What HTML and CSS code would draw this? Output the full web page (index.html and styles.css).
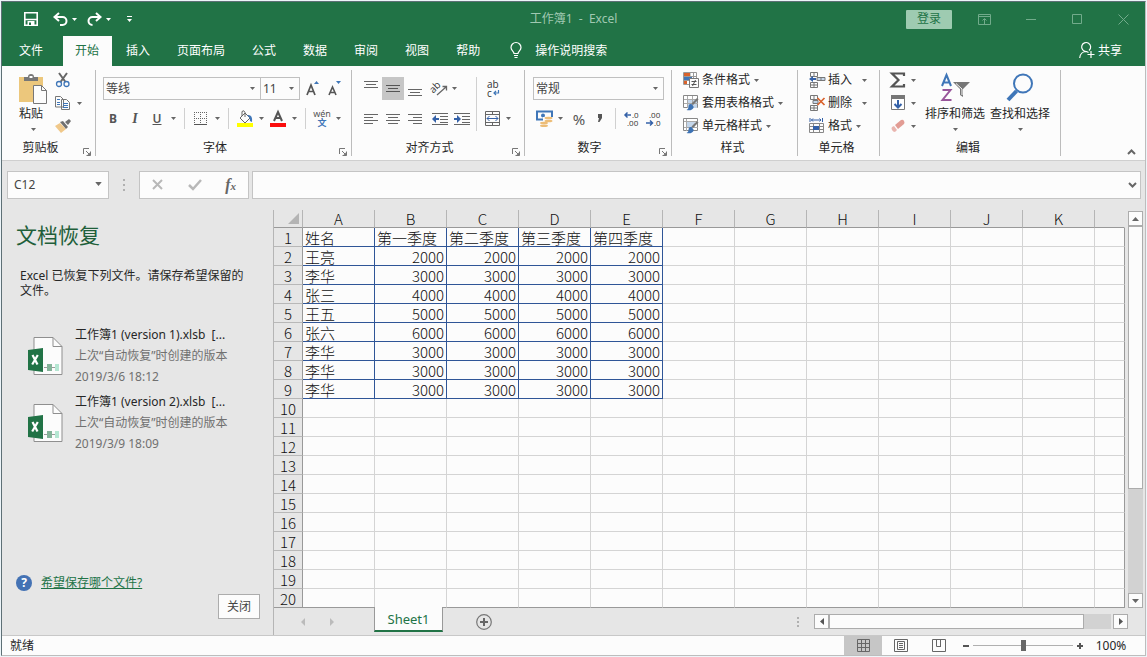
FILE: index.html
```html
<!DOCTYPE html>
<html lang="zh-CN">
<head>
<meta charset="utf-8">
<title>工作簿1 - Excel</title>
<link rel="stylesheet" href="styles.css">
</head>
<body>
<svg class="defs" aria-hidden="true">
  <symbol id="down" viewBox="0 0 5 3"><path d="M0 0h5L2.500 3z" fill="currentColor"/></symbol>
  <symbol id="launch" viewBox="0 0 8 8"><path d="M.5 6V.5H6M3 3l4 4M7.500 3.500v4h-4" fill="none" stroke="#777"/><path d="M7.500 4v3.500H4z" fill="#777"/></symbol>
  <symbol id="file" viewBox="0 0 36 40">
    <path d="M6 1.500h19l9 9V38.500H6z" fill="#fcfcfc" stroke="#8f8f8f"/><path d="M25 1.500V10.500h9" fill="none" stroke="#8f8f8f"/>
    <path d="M0 14l15-2v24L0 34z" fill="#217346"/><path d="M4.500 19l5 9.500M9.800 19l-5.600 9.500" stroke="#fff" stroke-width="2.200"/>
    <path d="M16 31.500h15" stroke="#9a9a9a"/><path d="M19 28h5v7h-5z" fill="#84b399"/><path d="M27 28h4v7h-4z" fill="#b5e6d2"/>
  </symbol>
  <symbol id="brushmark" viewBox="0 0 16 16"><path d="M15.500 4.500L10 10l-1.500-1.500L14 3z" fill="#777"/><path d="M9 9.500c-2-1-3.500 0-3.500 2.500 0 1.500-1 2.500-2 3 3 .8 6.500.2 7.300-3z" fill="#3c72b4"/></symbol>
</svg>
<div class="window">
  <header class="titlebar">
    <div class="quick">
      <button aria-label="保存"><svg width="14" height="14"><path d="M.8.8h12.400v12.400H.800zM1 7.500h12" fill="none" stroke="#fff" stroke-width="1.600"/><path d="M3.500 9h7v4.500h-7z" fill="#fff"/><path d="M5 10.500h2V13H5z" fill="#217346"/></svg></button>
      <button class="undo" aria-label="撤消"><svg width="15" height="14"><path d="M6 1L1.500 5L6 9M2 5h7.500a4 4 0 0 1 0 8H7" fill="none" stroke="#fff" stroke-width="2"/></svg></button>
      <button class="drop" aria-label="撤消列表"><svg width="5" height="3"><use href="#down"/></svg></button>
      <button class="redo" aria-label="恢复"><svg width="15" height="14"><path d="M9 1l4.500 4L9 9M13 5H5.500a4 4 0 0 0 0 8" fill="none" stroke="#fff" stroke-width="2"/></svg></button>
      <button class="drop" aria-label="恢复列表"><svg width="5" height="3"><use href="#down"/></svg></button>
      <button class="custom" aria-label="自定义快速访问工具栏"><svg width="5" height="6"><path d="M0 .5h5" stroke="#fff"/><path d="M0 3h5L2.500 6z" fill="#fff"/></svg></button>
    </div>
    <h1 class="title">工作簿1&nbsp; -&nbsp; Excel</h1>
    <div class="winctl">
      <button class="login">登录</button>
      <button aria-label="功能区显示选项"><svg width="13" height="11"><path d="M.5.5h12v10H.500zM.5 2.500h12M6.500 10V5M4.500 6.500l2-2 2 2" fill="none" stroke="#72ab8b"/></svg></button>
      <button aria-label="最小化"><svg width="11" height="11"><path d="M0 5.500h10" stroke="#72ab8b"/></svg></button>
      <button aria-label="最大化"><svg width="11" height="11"><path d="M.5.5h9v9h-9z" fill="none" stroke="#72ab8b"/></svg></button>
      <button aria-label="关闭窗口"><svg width="11" height="11"><path d="M.5.5l10 10M10.500.5l-10 10" stroke="#72ab8b"/></svg></button>
    </div>
  </header>
  <nav class="tabs">
    <button class="file">文件</button><button class="active">开始</button><button>插入</button><button>页面布局</button><button>公式</button><button>数据</button><button>审阅</button><button>视图</button><button>帮助</button>
    <button class="tell"><svg width="12" height="17"><path d="M4 11.500c0-2-3-3-3-6a5 5 0 0 1 10 0c0 3-3 4-3 6zM4 13.500h4M4.500 15.500h3" fill="none" stroke="#fff" stroke-width="1.200"/></svg>操作说明搜索</button>
    <button class="share"><svg width="16" height="17"><path d="M7.500 9.500a4.500 4.500 0 1 1 2.500-1M7.500 9.500C4 9.500 1 12 .7 16M7.500 9.500l2 1M12 9v7M8.500 12.500h7" fill="none" stroke="#fff" stroke-width="1.200"/></svg>共享</button>
  </nav>

  <section class="ribbon">
    <div class="group clip">
      <div class="body">
        <button class="big paste"><svg width="29" height="31"><path d="M0 3h24v25H0z" fill="#ecc77c"/><path d="M5 7V3h4q0-3 3-3t3 3h4v4z" fill="#777"/><path d="M10.500 2h3v2h-3z" fill="#fff"/><path d="M14.500 11.500h8l5 5v13h-13z" fill="#fcfcfc" stroke="#777"/><path d="M22.500 11.500v5h5" fill="none" stroke="#777"/></svg><span>粘贴</span><svg width="5" height="3"><use href="#down"/></svg></button>
        <div class="stack">
          <div class="row"><button class="ic" aria-label="剪切"><svg width="16" height="16"><path d="M4 1l6.500 9M12 1L5.500 10" stroke="#666" stroke-width="2"/><circle cx="4" cy="12" r="2.500" fill="none" stroke="#3f76b8" stroke-width="1.300"/><circle cx="11.500" cy="12" r="2.500" fill="none" stroke="#3f76b8" stroke-width="1.300"/></svg></button></div>
          <div class="row"><button class="ic" aria-label="复制"><svg width="16" height="16"><path d="M.5 1.500h5l3 3v7.500h-8zM6.500 4.500h5l3 3v7h-8z" fill="#fcfcfc" stroke="#777"/><path d="M2 4.500h3M2 7.500h3M2 9.500h3M8 8.500h5M8 10.500h5M8 12.500h5" stroke="#3f76b8"/></svg></button><button class="drop" aria-label="复制选项"><svg width="5" height="3"><use href="#down"/></svg></button></div>
          <div class="row"><button class="ic" aria-label="格式刷"><svg width="16" height="16"><path d="M0 8l5-3 6 6-5 4z" fill="#f0c88a"/><path d="M5 4l3-1 5 6-2 2zM10 4l4-3 2 2-3 4z" fill="#707070"/></svg></button></div>
        </div>
      </div>
      <div class="label"><span>剪贴板</span><button aria-label="剪贴板设置"><svg width="8" height="8"><use href="#launch"/></svg></button></div>
    </div>

    <div class="group font">
      <div class="body col">
        <div class="row">
          <div class="combo face"><select aria-label="字体"><option>等线</option></select><svg width="5" height="3"><use href="#down"/></svg></div>
          <div class="combo size"><select aria-label="字号"><option>11</option></select><svg width="5" height="3"><use href="#down"/></svg></div>
          <button class="ib grow" aria-label="增大字号"><svg width="16" height="16"><path d="M2 14L6 4l4 10M3.500 10.500h5" fill="none" stroke="#555" stroke-width="1.700"/><path d="M9 3l2.500-3L14 3z" fill="#3f76b8"/></svg></button>
          <button class="ib" aria-label="减小字号"><svg width="16" height="16"><path d="M2 14l3.500-8L9 14M3.500 11.500h4" fill="none" stroke="#555" stroke-width="1.600"/><path d="M9 0h5l-2.500 3z" fill="#3f76b8"/></svg></button>
        </div>
        <div class="row">
          <button class="ib b">B</button><button class="ib i">I</button><button class="ib u">U</button><button class="drop" aria-label="下划线选项"><svg width="5" height="3"><use href="#down"/></svg></button>
          <i class="sep"></i>
          <button class="ib" aria-label="边框"><svg width="14" height="14"><path d="M.5 0v12M6.500 0v12M12.500 0v12M0 .5h13M0 6.500h13" fill="none" stroke="#666" stroke-dasharray="1 1"/><path d="M0 12.500h13" stroke="#555"/></svg></button><button class="drop" aria-label="边框选项"><svg width="5" height="3"><use href="#down"/></svg></button>
          <i class="sep"></i>
          <button class="ib" aria-label="填充颜色"><svg width="16" height="17"><path d="M3 8l5-5 5 5-5 5z" fill="#fcfcfc" stroke="#666"/><path d="M5 6V1.500q2-2 3 1V7" fill="none" stroke="#666"/><path d="M10 5q6-1 5 7l-2-1q0-4-3-6" fill="#3f76b8"/><path d="M0 13h16v4H0z" fill="#ffff00"/></svg></button><button class="drop" aria-label="填充选项"><svg width="5" height="3"><use href="#down"/></svg></button>
          <button class="ib" aria-label="字体颜色"><svg width="16" height="17"><path d="M4 11L8 2l4 9M5.500 8h5" fill="none" stroke="#555" stroke-width="2"/><path d="M0 13h16v4H0z" fill="#fb0d0d"/></svg></button><button class="drop" aria-label="字体颜色选项"><svg width="5" height="3"><use href="#down"/></svg></button>
          <i class="sep"></i>
          <button class="ib wen" aria-label="拼音"><small>wén</small><b>文</b></button><button class="drop" aria-label="拼音选项"><svg width="5" height="3"><use href="#down"/></svg></button>
        </div>
      </div>
      <div class="label"><span>字体</span><button aria-label="字体设置"><svg width="8" height="8"><use href="#launch"/></svg></button></div>
    </div>

    <div class="group align">
      <div class="body">
        <div class="lines">
          <div class="row">
            <button class="ib" aria-label="顶端对齐"><svg width="14" height="16"><path d="M0 .5h14M2 3.500h10M0 6.500h14" stroke="#666"/></svg></button><button class="ib on" aria-label="垂直居中"><svg width="14" height="16"><path d="M0 4.500h14M2 7.500h10M0 10.500h14" stroke="#555"/></svg></button><button class="ib" aria-label="底端对齐"><svg width="14" height="16"><path d="M0 8.500h14M2 11.500h10M0 14.500h14" stroke="#666"/></svg></button>
            <button class="ib orient" aria-label="方向"><svg width="18" height="18"><text x="-1" y="10" transform="rotate(-45 5 8)" class="glyph">ab</text><path d="M6 15L15 7M11.500 6.500h4v4" fill="none" stroke="#666" stroke-width="1.300"/></svg></button><button class="drop near" aria-label="方向选项"><svg width="5" height="3"><use href="#down"/></svg></button>
          </div>
          <div class="row">
            <button class="ib" aria-label="左对齐"><svg width="14" height="12"><path d="M0 1.500h14M0 4.500h9M0 7.500h14M0 10.500h9" stroke="#666"/></svg></button><button class="ib" aria-label="居中"><svg width="14" height="12"><path d="M0 1.500h14M2 4.500h10M0 7.500h14M2 10.500h10" stroke="#666"/></svg></button><button class="ib" aria-label="右对齐"><svg width="14" height="12"><path d="M0 1.500h14M5 4.500h9M0 7.500h14M5 10.500h9" stroke="#666"/></svg></button>
            <button class="ib orient" aria-label="减少缩进"><svg width="16" height="14"><path d="M0 1.500h16M8 4.500h8M8 7.500h8M8 10.500h8M0 12.500h16" stroke="#666"/><path d="M0 7l4-4v3h3v2H4v3z" fill="#3461a8"/></svg></button><button class="ib" aria-label="增加缩进"><svg width="16" height="14"><path d="M0 1.500h16M8 4.500h8M8 7.500h8M8 10.500h8M0 12.500h16" stroke="#666"/><path d="M7 7L3 3v3H0v2h3v3z" fill="#3461a8"/></svg></button>
          </div>
        </div>
        <i class="sep tall"></i>
        <div class="lines">
          <div class="row"><button class="ib wrap" aria-label="自动换行"><svg width="14" height="18"><text x="1" y="8" class="glyph">ab</text><text x="1" y="17" class="glyph">c</text><path d="M12.500 10v3H8M10 11l-2 2 2 2" fill="none" stroke="#3f76b8" stroke-width="1.200"/></svg></button></div>
          <div class="row"><button class="ib" aria-label="合并后居中"><svg width="15" height="15"><path d="M.5.500h14v14H.500zM0 3.500h15M0 11.500h15M7.500 0v3M7.500 12v3" fill="none" stroke="#666"/><path d="M2 7.500h11M4.500 5l-2.500 2.500L4.500 10M10.500 5l2.500 2.500-2.500 2.500" fill="none" stroke="#3461a8"/></svg></button><button class="drop" aria-label="合并选项"><svg width="5" height="3"><use href="#down"/></svg></button></div>
        </div>
      </div>
      <div class="label"><span>对齐方式</span><button aria-label="对齐设置"><svg width="8" height="8"><use href="#launch"/></svg></button></div>
    </div>

    <div class="group number">
      <div class="body col">
        <div class="row"><div class="combo format"><select aria-label="数字格式"><option>常规</option></select><svg width="5" height="3"><use href="#down"/></svg></div></div>
        <div class="row">
          <button class="ib" aria-label="会计数字格式"><svg width="17" height="17"><path d="M1 1.500h15v8H1z" fill="#fcfcfc" stroke="#3f76b8" stroke-width="2"/><circle cx="7" cy="5.500" r="2" fill="#3f76b8"/><path d="M7 7h10v10H7z" fill="#fcfcfc"/><ellipse cx="12.500" cy="8" rx="4" ry="1.300" fill="#edbd77"/><ellipse cx="12.500" cy="11" rx="4" ry="1.300" fill="#edbd77"/><ellipse cx="8" cy="13" rx="4" ry="1.200" fill="#edbd77"/><ellipse cx="8" cy="15.800" rx="4" ry="1.200" fill="#edbd77"/></svg></button><button class="drop" aria-label="会计格式选项"><svg width="5" height="3"><use href="#down"/></svg></button>
          <button class="ib pct">%</button><button class="ib comma" aria-label="千位分隔样式"><svg width="6" height="9"><path d="M1 0h4v4L2.500 8H1l1-4H1z" fill="#555"/></svg></button>
          <i class="sep"></i>
          <button class="ib" aria-label="增加小数位数"><svg width="16" height="16"><text x="8" y="7" class="tiny">.0</text><text x="3" y="15" class="tiny">.00</text><path d="M7 4H1.500M3.500 1.500L1 4l2.500 2.500" fill="none" stroke="#3461a8" stroke-width="1.500"/></svg></button><button class="ib" aria-label="减少小数位数"><svg width="16" height="16"><text x="3" y="7" class="tiny">.00</text><text x="8" y="15" class="tiny">.0</text><path d="M0 12h6M4 9.500L6.500 12 4 14.500" fill="none" stroke="#3461a8" stroke-width="1.500"/></svg></button>
        </div>
      </div>
      <div class="label"><span>数字</span><button aria-label="数字设置"><svg width="8" height="8"><use href="#launch"/></svg></button></div>
    </div>

    <div class="group styles">
      <div class="body list">
        <button><svg width="16" height="16"><path d="M.5.5h13v12H.500zM7 1v11M1 4.500h12M1 8.500h12M10.500 1v11" fill="#fff" stroke="#999"/><path d="M1 1h6v3H1zM1 9h3v3H1z" fill="#d9622b"/><path d="M1 5h8v3H1z" fill="#3f76b8"/><path d="M6.500 6.500h9v9h-9z" fill="#fcfcfc" stroke="#777"/><path d="M8.500 9.500h5M8.500 12.500h5M12.500 8l-3 6" stroke="#555"/></svg>条件格式<svg width="5" height="3"><use href="#down"/></svg></button>
        <button><svg width="16" height="16"><path d="M.5.500h14v12H.500z" fill="#fff" stroke="#888"/><path d="M5 5h9v8H5z" fill="#c4d6ea"/><path d="M1 4.500h14M1 8.500h14M4.500 1v12M9.500 1v12" stroke="#aaa"/><use href="#brushmark"/></svg>套用表格格式<svg width="5" height="3"><use href="#down"/></svg></button>
        <button><svg width="16" height="16"><path d="M.5.500h14v12H.500z" fill="#fff" stroke="#888"/><path d="M4 4h8v6H4z" fill="#c4d6ea"/><path d="M1 3.500h14M1 9.500h14M3.500 1v12" stroke="#aaa"/><use href="#brushmark"/></svg>单元格样式<svg width="5" height="3"><use href="#down"/></svg></button>
      </div>
      <div class="label"><span>样式</span></div>
    </div>

    <div class="group cells">
      <div class="body list">
        <button><svg width="16" height="16"><path d="M1.500.5h7v4h-7zM5 .5v4M1.500 10.500h7v5h-7zM5 10.500v5M1.500 13h7" fill="none" stroke="#777"/><path d="M8 5.500h8v3H8zM12 5.500v3" fill="#c4d6ea" stroke="#777"/><path d="M0 7l4-3v2h3v2H4v2z" fill="#3461a8"/></svg>插入<svg class="far" width="5" height="3"><use href="#down"/></svg></button>
        <button><svg width="16" height="16"><path d="M1.500.5h7v4h-7zM5 .5v4M1.500 10.500h7v5h-7zM5 10.500v5M1.500 13h7" fill="none" stroke="#777"/><path d="M4 5.500h5v3H4z" fill="#c4d6ea" stroke="#777"/><path d="M8.500 3l7 7M15.500 3l-7 7" stroke="#d9622b" stroke-width="1.700"/></svg>删除<svg class="far" width="5" height="3"><use href="#down"/></svg></button>
        <button><svg width="16" height="16"><path d="M1 0v4M13.500 0v4M2 2h10M4 .5L2.500 2 4 3.500M10.500.500L12 2l-1.500 1.500" fill="none" stroke="#3461a8"/><path d="M.5 5.500h14v9H.500zM1 8.500h14M1 11.500h14M4.500 5v10M10.500 5v10" fill="none" stroke="#888"/><path d="M4 8h6v4H4z" fill="#3461a8"/></svg>格式<svg width="5" height="3"><use href="#down"/></svg></button>
      </div>
      <div class="label"><span>单元格</span></div>
    </div>

    <div class="group edit">
      <div class="body">
        <div class="stack">
          <div class="row"><button class="ic" aria-label="自动求和"><svg width="16" height="16"><path d="M14 4V1.500H2L8.500 8 2 14.500h12V12" fill="none" stroke="#555" stroke-width="2.200"/></svg></button><button class="drop" aria-label="求和选项"><svg width="5" height="3"><use href="#down"/></svg></button></div>
          <div class="row"><button class="ic" aria-label="填充"><svg width="16" height="16"><path d="M1.500.5h13v14h-13z" fill="#fff" stroke="#777"/><path d="M1 0h14v4H1z" fill="#777"/><path d="M8 5v8M4.500 9L8 12.500 11.500 9" fill="none" stroke="#3461a8" stroke-width="2"/></svg></button><button class="drop" aria-label="填充选项"><svg width="5" height="3"><use href="#down"/></svg></button></div>
          <div class="row"><button class="ic" aria-label="清除"><svg width="16" height="16"><path d="M5 7l6-5q2-1 3 1t0 3L8 11z" fill="#e29c94"/><path d="M4 8l3 4-2 2q-2 0-3-2t0-3z" fill="#e9b5af"/></svg></button><button class="drop" aria-label="清除选项"><svg width="5" height="3"><use href="#down"/></svg></button></div>
        </div>
        <button class="big"><svg width="30" height="31"><path d="M2 12L6.500 1 11 12M3.500 8.500h6" fill="none" stroke="#3f76b8" stroke-width="2"/><path d="M2.500 16h8l-8 10h9" fill="none" stroke="#98559a" stroke-width="2"/><path d="M13 8h17l-7 7v8l-3-2v-6z" fill="#777"/><path d="M16 9.500l6 5.500v6" fill="none" stroke="#fcfcfc"/></svg><span>排序和筛选</span><svg width="5" height="3"><use href="#down"/></svg></button>
        <button class="big"><svg width="30" height="31"><circle cx="18" cy="9.500" r="9" fill="none" stroke="#3f76b8" stroke-width="2"/><path d="M11.500 17L3 26" stroke="#3f76b8" stroke-width="4"/></svg><span>查找和选择</span><svg width="5" height="3"><use href="#down"/></svg></button>
      </div>
      <div class="label"><span>编辑</span></div>
    </div>
    <button class="collapse" aria-label="折叠功能区"><svg width="9" height="6"><path d="M1 5l3.500-3.500L8 5" fill="none" stroke="#666" stroke-width="2"/></svg></button>
  </section>

  <section class="formula">
    <div class="name"><input aria-label="名称框" value="C12"><button aria-label="名称列表"><svg width="7" height="4" viewBox="0 0 5 3"><use href="#down"/></svg></button></div>
    <svg class="dots" width="2" height="12"><path d="M1 0v2M1 5v2M1 10v2" stroke="#b0b0b0" stroke-width="2"/></svg>
    <div class="fx">
      <button aria-label="取消"><svg width="12" height="12"><path d="M1 1l9 9M10 1l-9 9" stroke="#b8b8b8" stroke-width="2"/></svg></button>
      <button aria-label="输入"><svg width="14" height="12"><path d="M1 6l4 4 8-9" fill="none" stroke="#b8b8b8" stroke-width="2.500"/></svg></button>
      <button class="fn" aria-label="插入函数"><em>f<sub>x</sub></em></button>
    </div>
    <div class="bar"><input aria-label="编辑栏"><button aria-label="展开编辑栏"><svg width="9" height="6"><path d="M1 1l3.500 3.500L8 1" fill="none" stroke="#666" stroke-width="2"/></svg></button></div>
  </section>

  <main class="work">
    <aside class="recovery">
      <h2>文档恢复</h2>
      <p>Excel 已恢复下列文件。请保存希望保留的文件。</p>
      <ul>
        <li><svg width="36" height="40"><use href="#file"/></svg><div><strong>工作簿1 (version 1).xlsb&nbsp; [...</strong><span>上次“自动恢复”时创建的版本</span><span>2019/3/6 18:12</span></div></li>
        <li><svg width="36" height="40"><use href="#file"/></svg><div><strong>工作簿1 (version 2).xlsb&nbsp; [...</strong><span>上次“自动恢复”时创建的版本</span><span>2019/3/9 18:09</span></div></li>
      </ul>
      <div class="help"><b>?</b><a href="#">希望保存哪个文件?</a></div>
      <button class="close">关闭</button>
    </aside>
    <section class="sheet">
      <div class="view">
        <table>
          <colgroup><col class="rowcol"><col><col><col><col><col><col><col><col><col><col><col><col class="rest"></colgroup>
          <thead><tr><th class="corner"><svg width="11" height="11"><path d="M11 0v11H0z" fill="#b4b4b4"/></svg><th>A<th>B<th>C<th>D<th>E<th>F<th>G<th>H<th>I<th>J<th>K<th></tr></thead>
          <tbody class="data">
            <tr><th>1<td>姓名<td>第一季度<td>第二季度<td>第三季度<td>第四季度<td><td><td><td><td><td><td></tr>
            <tr><th>2<td>王亮<td class="n">2000<td class="n">2000<td class="n">2000<td class="n">2000<td><td><td><td><td><td><td></tr>
            <tr><th>3<td>李华<td class="n">3000<td class="n">3000<td class="n">3000<td class="n">3000<td><td><td><td><td><td><td></tr>
            <tr><th>4<td>张三<td class="n">4000<td class="n">4000<td class="n">4000<td class="n">4000<td><td><td><td><td><td><td></tr>
            <tr><th>5<td>王五<td class="n">5000<td class="n">5000<td class="n">5000<td class="n">5000<td><td><td><td><td><td><td></tr>
            <tr><th>6<td>张六<td class="n">6000<td class="n">6000<td class="n">6000<td class="n">6000<td><td><td><td><td><td><td></tr>
            <tr><th>7<td>李华<td class="n">3000<td class="n">3000<td class="n">3000<td class="n">3000<td><td><td><td><td><td><td></tr>
            <tr><th>8<td>李华<td class="n">3000<td class="n">3000<td class="n">3000<td class="n">3000<td><td><td><td><td><td><td></tr>
            <tr><th>9<td>李华<td class="n">3000<td class="n">3000<td class="n">3000<td class="n">3000<td><td><td><td><td><td><td></tr>
          </tbody>
          <tbody>
            <tr><th>10<td><td><td><td><td><td><td><td><td><td><td><td></tr>
            <tr><th>11<td><td><td><td><td><td><td><td><td><td><td><td></tr>
            <tr><th>12<td><td><td><td><td><td><td><td><td><td><td><td></tr>
            <tr><th>13<td><td><td><td><td><td><td><td><td><td><td><td></tr>
            <tr><th>14<td><td><td><td><td><td><td><td><td><td><td><td></tr>
            <tr><th>15<td><td><td><td><td><td><td><td><td><td><td><td></tr>
            <tr><th>16<td><td><td><td><td><td><td><td><td><td><td><td></tr>
            <tr><th>17<td><td><td><td><td><td><td><td><td><td><td><td></tr>
            <tr><th>18<td><td><td><td><td><td><td><td><td><td><td><td></tr>
            <tr><th>19<td><td><td><td><td><td><td><td><td><td><td><td></tr>
            <tr class="last"><th>20<td><td><td><td><td><td><td><td><td><td><td><td></tr>
          </tbody>
        </table>
        <div class="vscroll">
          <button aria-label="向上滚动"><svg width="7" height="4"><path d="M0 4h7L3.500 0z" fill="#666"/></svg></button>
          <div class="thumb"></div><div class="track"></div>
          <button aria-label="向下滚动"><svg width="7" height="4"><path d="M0 0h7L3.500 4z" fill="#666"/></svg></button>
        </div>
      </div>
      <div class="sheetbar">
        <button class="nav" aria-label="上一张"><svg width="4" height="8"><path d="M4 0v8L0 4z" fill="#bbb"/></svg></button>
        <button class="nav" aria-label="下一张"><svg width="4" height="8"><path d="M0 0v8l4-4z" fill="#bbb"/></svg></button>
        <button class="sheettab">Sheet1</button>
        <button class="add" aria-label="新工作表"><svg width="16" height="16"><circle cx="8" cy="8" r="7.300" fill="none" stroke="#777" stroke-width="1.200"/><path d="M8 4v8M4 8h8" stroke="#666" stroke-width="2"/></svg></button>
        <svg class="dots" width="2" height="10"><path d="M1 0v2M1 4v2M1 8v2" stroke="#b0b0b0" stroke-width="2"/></svg>
        <div class="hscroll">
          <button aria-label="向左滚动"><svg width="4" height="7"><path d="M4 0v7L0 3.500z" fill="#555"/></svg></button>
          <div class="thumb"></div><div class="track"></div>
          <button aria-label="向右滚动"><svg width="4" height="7"><path d="M0 0v7l4-3.500z" fill="#555"/></svg></button>
        </div>
      </div>
    </section>
  </main>

  <footer class="status">
    <span>就绪</span>
    <div class="views">
      <button class="on" aria-label="普通"><svg width="13" height="13"><path d="M.5.500h12v12H.500zM4.500 0v13M8.500 0v13M0 4.500h13M0 8.500h13" fill="none" stroke="#666"/></svg></button>
      <button aria-label="页面布局视图"><svg width="14" height="13"><path d="M.5.500h13v12H.500zM3.500 2.500h7v8h-7zM5 4.500h4M5 6.500h4M5 8.500h4" fill="none" stroke="#666"/></svg></button>
      <button aria-label="分页预览"><svg width="14" height="13"><path d="M.5.500h13v12H.500zM4.500 0v7.500h4V0M8 7.500h1" fill="none" stroke="#666"/></svg></button>
    </div>
    <button class="zoombtn" aria-label="缩小"><svg width="8" height="8"><path d="M1 4h6" stroke="#555" stroke-width="2"/></svg></button>
    <input type="range" aria-label="缩放" min="0" max="100" value="50">
    <button class="zoombtn" aria-label="放大"><svg width="8" height="8"><path d="M4 1v6M1 4h6" stroke="#555" stroke-width="2"/></svg></button>
    <button class="percent">100%</button>
  </footer>
</div>
</body>
</html>
```
FILE: styles.css
```css
* { box-sizing: border-box; }
body { margin: 0; background: #edf5f9; color: #262626; font: 12px/16px "Noto Sans", "Noto Sans CJK SC", sans-serif; }
button, input, select { font: inherit; color: inherit; border: 0; padding: 0; margin: 0; background: none; outline: 0; }
button { display: flex; align-items: center; justify-content: center; white-space: nowrap; }
svg { display: block; flex: none; overflow: visible; }
h1, h2, p, ul { margin: 0; padding: 0; font-weight: 400; }
.defs { display: none; }
.window { display: flex; flex-direction: column; min-height: calc(100vh - 2px); margin: 1px; border: 1px solid #bdbdbd; border-left-color: #5e7076; border-top-color: #5e7076; background: #e6e6e6; }

.titlebar { display: grid; grid-template-columns: 1fr auto 1fr; align-items: center; height: 34px; background: #217346; color: #fff; }
.quick { display: flex; align-items: center; padding-left: 22px; }
.undo { margin-left: 15px; }
.redo { margin-left: 7px; }
.custom { margin-left: 13px; }
.drop { width: 11px; height: 20px; color: #666; }
.quick .drop { width: 12px; color: #fff; }
.title { font-size: 12px; line-height: 16px; color: #a0c9b2; }
.winctl { display: flex; align-items: center; justify-content: flex-end; gap: 35px; padding-right: 16px; }
.login { width: 46px; height: 19px; margin-right: -9px; border-radius: 1px; background: #9ecbb1; color: #217346; }

.tabs { display: flex; gap: 2px; height: 30px; padding-left: 5px; background: #217346; color: #fff; }
.tabs button { padding: 0 13px 1px 12px; }
.tabs .file { margin-right: 5px; }
.tabs .active { background: #fcfcfc; color: #217346; }
.tabs .tell { gap: 13px; padding-left: 15px; }
.tabs .share { gap: 3px; margin-left: auto; padding-right: 23px; }

.ribbon { display: flex; padding: 4px 0; border-bottom: 1px solid #cfcfcf; background: #fcfcfc; }
.group { display: flex; flex-direction: column; height: 86px; border-right: 1px solid #bcbcbc; }
.body { display: flex; flex: 1; }
.row { display: flex; align-items: center; }
.body.col, .lines { display: flex; flex-direction: column; gap: 7px; padding-top: 7px; }
.col .row, .lines .row { height: 23px; }
.label { display: flex; align-items: flex-end; height: 16px; padding: 0 4px 0 0; }
.label span { flex: 1; align-self: flex-end; text-align: center; }
.ib { width: 22px; height: 23px; color: #555; }
.on { background: #c6c6c6; }
.sep { width: 1px; height: 21px; margin: 0 5px; background: #d0d0d0; }
.sep.tall { height: 54px; margin: 7px 4px 0 3px; }
.stack { display: flex; flex-direction: column; gap: 3px; }
.stack .row { height: 20px; }
.ic { width: 16px; height: 20px; }
.big { flex-direction: column; justify-content: flex-start; align-self: flex-start; padding-top: 4px; }
.big span { margin: 1px 0 6px; }
.big > svg:last-child { color: #666; }
.clip { width: 94px; }
.clip .body { padding-left: 17px; gap: 7px; }
.clip .label { padding-left: 0; }
.clip .label span { padding-right: 4px; }
.paste span { align-self: flex-start; }
.clip .drop { width: 17px; }
.font { width: 256px; }
.font .body { padding-left: 6px; }
.font .label, .align .label { padding-right: 4px; }
.font .label span, .align .label span, .number .label span { padding-right: 5px; }
.combo { display: flex; align-items: center; height: 23px; border: 1px solid #c0c0c0; background: #fcfcfc; color: #444; }
.combo select { flex: 1; min-width: 0; height: 21px; padding-left: 2px; appearance: none; }
.combo svg { margin-right: 5px; color: #666; }
.face { width: 158px; margin-left: 1px; }
.size { width: 40px; margin-left: -1px; }
.grow { margin-left: 2px; }
.format { width: 131px; }
.b { font-weight: 700; }
.i { font: italic 700 14px/16px "Liberation Serif", serif; }
.u { font-weight: 600; text-decoration: underline; }
.wen { flex-direction: column; }
.wen small { font-size: 9px; line-height: 9px; }
.wen b { font-size: 9px; line-height: 10px; color: #3f76b8; }
.glyph { font: 10px "Open Sans", sans-serif; fill: #333; }
.tiny { font: 8px "Open Sans", sans-serif; fill: #333; }
.align { width: 173px; }
.align .body { padding-left: 8px; }
.orient { margin-left: 3px; }
.drop.near { width: 6px; }
.wrap { padding-left: 2px; }
.number { width: 147px; }
.number .body { padding-left: 8px; }
.pct { margin-left: 2px; font-size: 15px; }
.comma { width: 20px; }
.list { flex-direction: column; align-items: flex-start; gap: 3px; }
.list button { gap: 3px; height: 20px; }
.list svg:last-child { color: #666; margin-left: 1px; }
.list .far:last-child { margin-left: 7px; }
.styles { width: 126px; }
.styles .list { padding-left: 11px; }
.cells { width: 82px; }
.cells .list { padding-left: 11px; }
.edit { width: 181px; }
.edit .body { padding-left: 10px; }
.edit .drop { width: 14px; }
.edit .stack { margin-right: 5px; }
.edit .big + .big { margin-left: 5px; }
.collapse { align-self: flex-end; margin-left: auto; padding: 0 9px 1px 0; }

.formula { display: flex; align-items: center; padding: 10px 4px 11px 5px; color: #444; }
.name, .fx, .bar { display: flex; align-items: center; height: 28px; border: 1px solid #c4c4c4; background: #fcfcfc; }
.name { width: 102px; }
.name input { flex: 1; width: 0; padding-left: 6px; }
.name button { padding: 0 6px 3px; color: #666; }
.formula .dots { margin: 0 14px; }
.fx { justify-content: space-between; width: 110px; padding: 0 12px; }
.fn { font: 700 16px/20px "Liberation Serif", serif; color: #666; }
.fn sub { font-size: 11px; line-height: 0; vertical-align: baseline; }
.bar { flex: 1; margin-left: 3px; }
.bar input { flex: 1; min-width: 0; padding: 0 6px; }
.bar button { padding: 0 3px; }

.work { display: flex; flex: 1; }
.recovery { display: flex; flex-direction: column; flex: none; width: 271px; padding: 10px 13px 16px 14px; }
.recovery h2 { font-size: 21px; line-height: 30px; color: #1f5f3a; }
.recovery p { padding: 18px 9px 0 4px; line-height: 15px; }
.recovery ul { padding: 26px 0 0 12px; list-style: none; }
.recovery li { display: flex; gap: 11px; align-items: center; margin-bottom: 4px; }
.recovery li div { display: flex; flex-direction: column; line-height: 21px; color: #707070; white-space: nowrap; }
.recovery strong { font-weight: 400; color: #262626; }
.help { display: flex; align-items: center; gap: 9px; margin-top: auto; }
.help b { width: 16px; height: 16px; border-radius: 50%; background: #4472b4; color: #fff; text-align: center; }
.help a { color: #217346; }
.close { align-self: flex-end; width: 42px; height: 25px; margin-top: 3px; border: 1px solid #acacac; background: #fcfcfc; color: #444; }

.sheet { flex: 1; min-width: 0; border-left: 1px solid #b5b5b5; }
.view { display: flex; }
table { flex: 1; width: 0; table-layout: fixed; border-collapse: separate; border-spacing: 0; font: 15px/17px "Noto Sans CJK SC", sans-serif; color: #111; }
col { width: 72px; }
.rowcol { width: 29px; }
.rest { width: auto; }
th, td { height: 19px; padding: 1px 0 0; border-right: 1px solid #d4d4d4; border-bottom: 1px solid #d4d4d4; white-space: nowrap; font-weight: 300; }
td { padding: 1px 2px 0; background: #fcfcfc; }
th { border-right-color: #999; border-bottom-color: #b8b8b8; text-align: center; }
thead th { height: 18px; padding: 0; border-right-color: #b5b5b5; border-bottom-color: #999; }
thead th:last-child { border-right-color: transparent; }
.corner svg { margin-left: 14px; }
td:last-child { border-right-color: #999; }
.last td, .last th { border-bottom-color: #999; }
.data td:nth-child(-n+6) { border-color: #2f5597; }
.n { text-align: right; }
.vscroll { display: flex; flex-direction: column; width: 15px; margin: 1px 2px 0 3px; }
.vscroll button, .hscroll button { flex: none; width: 15px; height: 15px; border: 1px solid #acacac; background: #fcfcfc; }
.vscroll .thumb { flex: 5; border: 1px solid #acacac; background: #fcfcfc; }
.vscroll .track { flex: 2; background: #d2d2d2; }
.sheetbar { display: flex; align-items: center; height: 27px; }
.nav { width: 4px; margin-left: 27px; }
.nav + .nav { margin-left: 25px; }
.sheettab { align-self: flex-start; width: 69px; height: 25px; margin: -1px 0 0 40px; border: 1px solid #999; border-top: 0; border-bottom: 2px solid #217346; background: #fcfcfc; color: #217346; font-size: 13px; }
.add { margin-left: 33px; }
.sheetbar .dots { margin-left: auto; }
.hscroll { display: flex; width: 314px; margin: 0 17px 0 15px; }
.hscroll .thumb { flex: 1; border: 1px solid #acacac; background: #fcfcfc; }
.hscroll .track { width: 27px; margin-right: 2px; background: #d2d2d2; }

.status { display: flex; align-items: center; height: 20px; border-top: 1px solid #c8c8c8; background: #fcfcfc; padding: 0 18px 0 8px; }
.views { display: flex; align-self: stretch; margin-left: auto; margin-right: 4px; }
.views button { width: 38px; }
.zoombtn { width: 8px; }
.status input { width: 100px; height: 12px; margin: 0 3px; appearance: none; background: linear-gradient(#b0b0b0, #b0b0b0) center / 100% 1px no-repeat; }
.status input::-webkit-slider-thumb { appearance: none; width: 5px; height: 11px; background: #666; }
.percent { width: 32px; margin-left: 11px; }
```
